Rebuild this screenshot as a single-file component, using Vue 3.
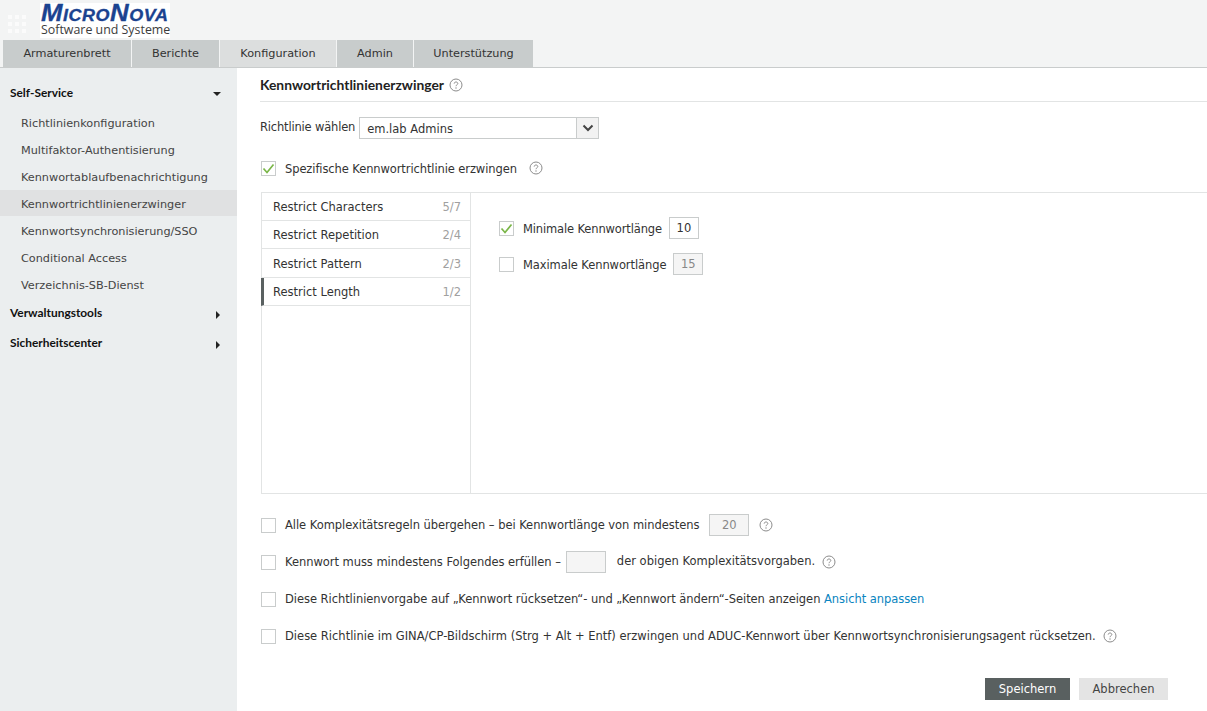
<script setup>
const tabs = [
  { label: 'Armaturenbrett', w: 128 },
  { label: 'Berichte', w: 87 },
  { label: 'Konfiguration', w: 116 },
  { label: 'Admin', w: 76 },
  { label: 'Unterstützung', w: 119 },
]
const subs = ['Richtlinienkonfiguration', 'Multifaktor-Authentisierung', 'Kennwortablaufbenachrichtigung', 'Kennwortrichtlinienerzwinger', 'Kennwortsynchronisierung/SSO', 'Conditional Access', 'Verzeichnis-SB-Dienst']
const rules = [
  { label: 'Restrict Characters', n: '5/7', h: 28 },
  { label: 'Restrict Repetition', n: '2/4', h: 28 },
  { label: 'Restrict Pattern', n: '2/3', h: 29 },
  { label: 'Restrict Length', n: '1/2', h: 28 },
]
</script>

<template>
  <div class="page">
    <header class="top">
      <div class="brand">
        <div class="dots"><i v-for="n in 9" :key="n"></i></div>
        <div class="logo">
          <div class="logo-main">MicroNova</div>
          <div class="logo-sub">Software und Systeme</div>
        </div>
      </div>
      <nav class="tabs">
        <a v-for="(t, i) in tabs" :key="t.label" class="tab" :class="{ on: i === 2 }" :style="{ width: t.w + 'px' }">{{ t.label }}</a>
      </nav>
    </header>
    <div class="body">
      <aside class="side">
        <div class="group first"><span>Self-Service</span><i class="down"></i></div>
        <a v-for="(s, i) in subs" :key="s" class="sub" :class="{ on: i === 3 }">{{ s }}</a>
        <div class="group g2"><span>Verwaltungstools</span><i class="right"></i></div>
        <div class="group g3"><span>Sicherheitscenter</span><i class="right"></i></div>
      </aside>
      <main class="main">
        <h1 class="title">Kennwortrichtlinienerzwinger
          <svg class="help hm" viewBox="0 0 14 14"><circle cx="7" cy="7" r="6"/><path d="M5.2 5.6c0-1 .8-1.6 1.8-1.6s1.8.6 1.8 1.5c0 1.3-1.8 1.3-1.8 2.7"/><circle class="dot" cx="7" cy="10" r=".7"/></svg>
        </h1>
        <div class="pick">
          <span class="pick-label">Richtlinie wählen</span>
          <div class="select"><span class="val">em.lab Admins</span><span class="arrow"><svg viewBox="0 0 12 8" width="12" height="8"><path d="M1.5 1.5 6 6l4.5-4.5" fill="none" stroke="#444" stroke-width="2"/></svg></span></div>
        </div>
        <div class="enforce">
          <span class="cb"><svg viewBox="0 0 13 13"><path d="M1.5 6.5 5 10.5 11.5 2.5" fill="none" stroke="#7ab648" stroke-width="1.7"/></svg></span>
          <span class="lbl t1">Spezifische Kennwortrichtlinie erzwingen</span>
          <svg class="help h1" viewBox="0 0 14 14"><circle cx="7" cy="7" r="6"/><path d="M5.2 5.6c0-1 .8-1.6 1.8-1.6s1.8.6 1.8 1.5c0 1.3-1.8 1.3-1.8 2.7"/><circle class="dot" cx="7" cy="10" r=".7"/></svg>
        </div>
        <section class="panel">
          <div class="rules">
            <a v-for="(r, i) in rules" :key="r.label" class="rule" :class="{ on: i === 3 }" :style="{ height: r.h + 'px' }">
              <span>{{ r.label }}</span><em>{{ r.n }}</em>
            </a>
          </div>
          <div class="detail">
            <div class="drow">
              <span class="cb"><svg viewBox="0 0 13 13"><path d="M1.5 6.5 5 10.5 11.5 2.5" fill="none" stroke="#7ab648" stroke-width="1.7"/></svg></span>
              <span class="lbl t1b dl">Minimale Kennwortlänge</span>
              <span class="box">10</span>
            </div>
            <div class="drow">
              <span class="cb"></span>
              <span class="lbl t2 dl">Maximale Kennwortlänge</span>
              <span class="box off">15</span>
            </div>
          </div>
        </section>
        <div class="opts">
          <div class="opt">
            <span class="cb"></span>
            <span class="lbl t3">Alle Komplexitätsregeln übergehen – bei Kennwortlänge von mindestens</span>
            <span class="box wide off b1">20</span>
            <svg class="help h2" viewBox="0 0 14 14"><circle cx="7" cy="7" r="6"/><path d="M5.2 5.6c0-1 .8-1.6 1.8-1.6s1.8.6 1.8 1.5c0 1.3-1.8 1.3-1.8 2.7"/><circle class="dot" cx="7" cy="10" r=".7"/></svg>
          </div>
          <div class="opt">
            <span class="cb"></span>
            <span class="lbl t3">Kennwort muss mindestens Folgendes erfüllen –</span>
            <span class="box wide off b2"></span>
            <span class="lbl after">der obigen Komplexitätsvorgaben.</span>
            <svg class="help h3" viewBox="0 0 14 14"><circle cx="7" cy="7" r="6"/><path d="M5.2 5.6c0-1 .8-1.6 1.8-1.6s1.8.6 1.8 1.5c0 1.3-1.8 1.3-1.8 2.7"/><circle class="dot" cx="7" cy="10" r=".7"/></svg>
          </div>
          <div class="opt">
            <span class="cb"></span>
            <span class="lbl t3">Diese Richtlinienvorgabe auf „Kennwort rücksetzen“- und „Kennwort ändern“-Seiten anzeigen <a class="link">Ansicht anpassen</a></span>
          </div>
          <div class="opt">
            <span class="cb"></span>
            <span class="lbl">Diese Richtlinie im GINA/CP-Bildschirm (Strg + Alt + Entf) erzwingen und ADUC-Kennwort über Kennwortsynchronisierungsagent rücksetzen.</span>
            <svg class="help h3" viewBox="0 0 14 14"><circle cx="7" cy="7" r="6"/><path d="M5.2 5.6c0-1 .8-1.6 1.8-1.6s1.8.6 1.8 1.5c0 1.3-1.8 1.3-1.8 2.7"/><circle class="dot" cx="7" cy="10" r=".7"/></svg>
          </div>
        </div>
        <div class="actions">
          <button class="btn save">Speichern</button>
          <button class="btn cancel">Abbrechen</button>
        </div>
      </main>
    </div>
  </div>
</template>

<style>
html, body { margin: 0; background: #fff; }
</style>

<style scoped>
.page {
  width: 1207px; height: 711px; overflow: hidden; display: flex; flex-direction: column;
  font: 11.5px/14px "DejaVu Sans", Verdana, sans-serif; color: #333; background: #fff;
}
.top { height: 68px; background: #f3f4f4; border-bottom: 1px solid #c9cccc; box-sizing: border-box; display: flex; flex-direction: column; }
.brand { height: 40px; display: flex; padding-left: 8px; box-sizing: border-box; }
.dots { width: 18px; display: grid; grid-template-columns: repeat(3, 4px); gap: 3px; align-content: start; padding-top: 15px; }
.dots i { width: 4px; height: 4px; background: #fbfbfb; }
.logo { margin-left: 14px; margin-top: 3px; width: 130px; height: 35px; background: #fff; padding-left: 1px; box-sizing: border-box; }
.logo-main { font: italic 700 23px/20px "Liberation Sans", Arial, sans-serif; font-variant: small-caps; letter-spacing: .5px; color: #1b4390; -webkit-text-stroke: .3px #1b4390; white-space: nowrap; transform: scaleX(1.12); transform-origin: left center; }
.logo-sub { font: 12.4px/13px "Open Sans", sans-serif; color: #3c3c3c; white-space: nowrap; }
.tabs { display: flex; padding-left: 3px; gap: 1px; font-size: 11.25px; }
.tab { height: 27px; background: #c8cccc; display: flex; align-items: center; justify-content: center; color: #333; box-sizing: border-box; }
.tab.on { background: #dcdede; }
.body { flex: 1; display: flex; min-height: 0; }
.side { width: 237px; flex: none; background: #ebeeef; font-size: 11.25px; }
.group { font: 700 11.9px/16px Lato, sans-serif; color: #111; padding: 0 15px 0 10px; display: flex; justify-content: space-between; align-items: center; }
.first { margin-top: 17px; margin-bottom: 9px; }
.g2 { margin-top: 6px; }
.g3 { margin-top: 14px; }
.down { width: 0; height: 0; border: 4px solid transparent; border-top-color: #222; border-bottom: 0; margin-top: 2px; margin-right: 1px; }
.right { width: 0; height: 0; border: 4px solid transparent; border-left-color: #222; border-right: 0; margin-top: 3px; margin-right: 2px; }
.sub { display: block; height: 27px; line-height: 27px; padding-left: 21px; color: #444; }
.sub.on { background: #e0e1e2; margin-top: -1px; margin-bottom: 2px; height: 26px; line-height: 29px; }
.main { flex: 1; min-width: 0; padding-left: 23px; }
.title { margin: 0; height: 34px; font: 700 13.85px/33px Lato, sans-serif; color: #222; border-bottom: 1px solid #e2e4e4; box-sizing: border-box; display: flex; align-items: center; }
.help { width: 14px; height: 14px; fill: none; stroke: #8c8c8c; stroke-width: 1; flex: none; }
.help .dot { fill: #8c8c8c; stroke: none; }
.hm { margin-left: 5px; }
.h1 { margin-left: 12px; }
.h2 { margin-left: 10px; }
.h3 { margin-left: 7px; }
.pick { display: flex; align-items: center; margin-top: 15px; height: 22px; }
.pick-label { margin-right: 4px; margin-top: -2px; letter-spacing: -.18px; }
.select { width: 240px; height: 22px; border: 1px solid #c9cccc; box-sizing: border-box; display: flex; align-items: center; }
.val { flex: 1; padding-left: 7px; padding-top: 1px; }
.arrow { width: 21px; height: 20px; background: #f2f2f2; border-left: 1px solid #c9cccc; display: flex; align-items: center; justify-content: center; }
.enforce { display: flex; align-items: center; margin-top: 21px; height: 16px; padding-left: 1px; }
.cb { width: 13px; height: 13px; border: 1px solid #c9cccc; display: inline-block; flex: none; background: #fff; }
.cb svg { display: block; width: 13px; height: 13px; }
.lbl { margin-left: 9px; white-space: nowrap; color: #333; }
.t1 { letter-spacing: -.1px; }
.t1b { letter-spacing: -.14px; }
.t2 { letter-spacing: -.09px; }
.t3 { letter-spacing: -.05px; }
.enforce .lbl, .dl { padding-top: 1px; }
.panel { margin-top: 16px; margin-left: 1px; height: 302px; border-top: 1px solid #e2e4e4; border-bottom: 1px solid #e2e4e4; display: flex; box-sizing: border-box; }
.rules { width: 210px; border-left: 1px solid #e2e4e4; border-right: 1px solid #e2e4e4; flex: none; box-sizing: border-box; }
.rule { display: flex; justify-content: space-between; align-items: center; padding: 1px 9px 0 11px; border-bottom: 1px solid #e2e4e4; box-sizing: border-box; }
.rule.on { border-left: 3px solid #5a6161; padding-left: 9px; margin-left: -1px; }
.rule em { font-style: normal; color: #a0a0a0; }
.detail { padding: 24px 0 0 28px; }
.drow { display: flex; align-items: center; height: 22px; margin-bottom: 14px; }
.box { height: 22px; box-sizing: border-box; border: 1px solid #c9cccc; display: inline-flex; align-items: center; justify-content: center; width: 30px; margin-left: 7px; background: #fff; }
.box.off { background: #f5f5f5; color: #888; }
.opts { padding-top: 20px; padding-left: 1px; }
.opt { display: flex; align-items: center; height: 22px; margin-bottom: 15px; }
.wide { width: 40px; }
.b1 { margin-left: 10px; }
.b2 { margin-left: 5px; }
.after { margin-top: -2px; margin-left: 11px; }
.link { color: #0a84c0; }
.actions { display: flex; justify-content: flex-end; gap: 9px; margin-top: 31px; padding-right: 39px; }
.btn { height: 22px; border: 0; padding: 0; font: inherit; }
.save { width: 85px; background: #596060; color: #fff; }
.cancel { width: 89px; background: #e4e4e4; color: #444; }
</style>
